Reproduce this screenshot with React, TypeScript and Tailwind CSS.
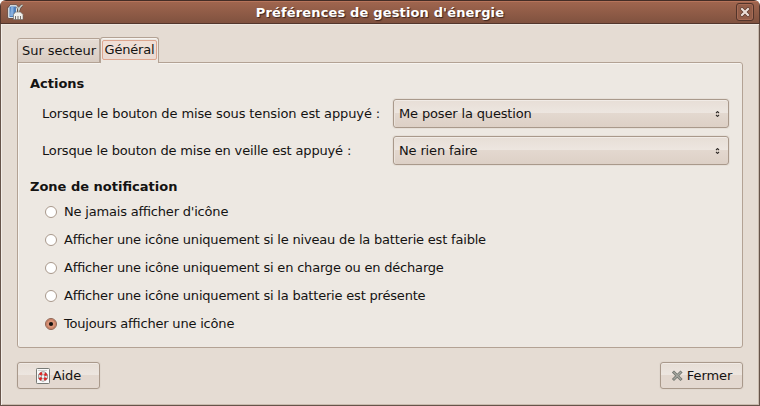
import React from "react";

function TitleIcon() {
  return (
    <svg width="17" height="17" viewBox="0 0 17 17" className="block">
      <path d="M3 .6h6.500l1 1.500v12.400H1.500L.6 13V3.200h1z" fill="#dde5e8" stroke="#5c4038" strokeWidth=".8" />
      <path d="M3.500 2.500h5.500v10.500h-6.500v-9.500z" fill="#4f7fba" />
      <path d="M4 3h2.500v9H3z" fill="#86aedd" />
      <path d="M15.500 1c-2 1-3.500 3-4 7M10.500 2.500l1.500 4" fill="none" stroke="#5c4038" strokeWidth="2.600" />
      <path d="M15.500 1c-2 1-3.500 3-4 7M10.500 2.500l1.500 4" fill="none" stroke="#c5cdc8" strokeWidth="1.500" />
      <path d="M8.500 8h5l2.500 2.500V15.500H6.500v-5z" fill="#f0efec" stroke="#6d6863" strokeWidth=".6" />
      <path d="M8.500 12v3.500M11 12v3.500M13.500 12v3.500" stroke="#66615d" strokeWidth=".9" />
    </svg>
  );
}

function HelpIcon() {
  return (
    <svg width="14" height="16" viewBox="0 0 14 16" className="block">
      <rect x=".5" y=".5" width="13" height="15" rx=".8" fill="#fafafa" stroke="#777a75" />
      <path d="M2 2.500h9" stroke="#d0d1ce" />
      <circle cx="7" cy="8.500" r="3.300" fill="none" stroke="#666" strokeWidth="3.400" />
      <circle cx="7" cy="8.500" r="3.300" fill="none" stroke="#e2dfdd" strokeWidth="2.400" />
      <circle cx="7" cy="8.500" r="3.300" fill="none" stroke="#dd2626" strokeWidth="2.600" strokeDasharray="2.592 2.592" strokeDashoffset="-1.296" />
    </svg>
  );
}

function CloseIcon() {
  return (
    <svg width="12" height="12" viewBox="0 0 12 12" className="block">
      <path d="M3 2.500l6.500 6.500M9.500 2.500L3 9" stroke="#71746e" strokeWidth="3" strokeLinecap="square" />
      <path d="M3 2.500l6.500 6.500M9.500 2.500L3 9" stroke="#a3a69f" strokeWidth="1.400" strokeLinecap="square" />
    </svg>
  );
}

function Combo({ value }: { value: string }) {
  return (
    <button className="flex h-[29px] w-[336px] items-center justify-between rounded-[3px] border border-[#a9998b] bg-[linear-gradient(#e7ded6_0%,#ede6e0_48%,#e3d8cf_50%,#ddd0c6_100%)] pr-[8px] pl-[5px] shadow-[inset_0_1px_0_#f1ebe6,inset_1px_0_0_#ebe3dc,0_0_0_1px_#e6dfd8]">
      <span className="tracking-[-0.15px]">{value}</span>
      <svg width="5" height="6" viewBox="0 0 5 6">
        <path d="M1 2L2.500 .6 4 2M1 4l1.500 1.400L4 4" fill="none" stroke="#332e2b" strokeWidth="1.100" />
      </svg>
    </button>
  );
}

function Radio({ label, checked = false }: { label: string; checked?: boolean }) {
  return (
    <label className="flex h-[28px] items-center">
      <svg width="12" height="12" viewBox="0 0 12 12" className="mr-[7px] block">
        <circle cx="6" cy="6" r="5.500" fill={checked ? "#d99478" : "#fff"} stroke={checked ? "#8d6554" : "#a8988b"} />
        {checked && <circle cx="6" cy="6" r="4.400" fill="none" stroke="#c47d62" />}
        {checked && <circle cx="6" cy="6" r="2.100" fill="#15110f" />}
      </svg>
      <span className="tracking-[-0.19px] [font-feature-settings:'liga'_1]">{label}</span>
    </label>
  );
}

const button =
  "flex h-[27px] w-[83px] items-center justify-center rounded-[3px] border border-[#a9998b] bg-[linear-gradient(#e7ded6_0%,#ede6e0_48%,#e3d8cf_50%,#e3d8d0_100%)] shadow-[inset_0_1px_0_#f1ebe6,0_0_0_1px_#e0d7ce]";

export default function App() {
  return (
    <div className="h-[406px] w-[760px] bg-white font-['DejaVu_Sans',sans-serif] text-[13px] leading-[16px] whitespace-nowrap text-[#141312]">
      <div className="flex h-full flex-col overflow-hidden rounded-t-[6px] bg-[#e5dcd3]">
        <header className="flex h-[24px] items-center border border-[#52362c] border-t-[#442d26] bg-[linear-gradient(#a1664f,#80523f)] pr-[5px] pl-[6px] shadow-[inset_0_1px_0_#b6745b]">
          <TitleIcon />
          <h1 className="flex-1 pt-px text-center font-bold tracking-[0.15px] text-white [text-shadow:1px_1px_1px_#3c241c]">
            Préférences de gestion d'énergie
          </h1>
          <button className="flex h-[18px] w-[18px] items-center justify-center rounded-[3px] border border-[#52342a] bg-[#935e49] shadow-[inset_0_0_0_1px_#a66b55]">
            <svg width="10" height="10" viewBox="0 0 10 10">
              <path d="M2 2l6 6M8 2L2 8" stroke="#5a372b" strokeWidth="3.600" strokeLinecap="square" />
              <path d="M2 2l6 6M8 2L2 8" stroke="#ecdfd8" strokeWidth="2.200" strokeLinecap="square" />
            </svg>
          </button>
        </header>

        <main className="flex flex-1 flex-col border-x border-b border-[#66544a] pr-[16px] pl-[16px] pt-[13px] shadow-[inset_1px_0_0_#f3eee9,inset_0_1px_0_#eee7e0,inset_-1px_-1px_0_#c9bbae]">
          <div className="relative z-10 -mb-px flex h-[26px] items-start">
            <div className="mt-px flex h-[25px] w-[83px] items-center justify-center rounded-tl-[3px] border border-[#b3a294] bg-[linear-gradient(#e5dbd3_0%,#e0d5cc_50%,#d8ccc2_100%)] pl-px tracking-[-0.05px] shadow-[inset_0_1px_0_#eee7e0]">
              Sur secteur
            </div>
            <div className="h-[26px] w-[59px] rounded-t-[3px] border border-b-0 border-[#b3a294] bg-[#ede8e2] px-px pt-[2px] shadow-[inset_0_1px_0_#f7f4f0,0_1px_0_#ede8e2]">
              <div className="flex h-[20px] items-center justify-center rounded-[2px] border border-[#dda58f] bg-[linear-gradient(#f0dfd7_50%,#ebdbd3_50%)] tracking-[-0.2px]">
                Général
              </div>
            </div>
          </div>

          <section className="h-[286px] rounded-b-[3px] rounded-tr-[3px] border border-[#b3a294] bg-[#ede8e2] pt-[13px] pr-[13px] pl-[12px] shadow-[inset_1px_1px_0_#f7f4f0]">
            <h2 className="font-bold">Actions</h2>
            <div className="mt-[7px] flex h-[29px] items-center justify-between pl-[12px]">
              <span className="tracking-[-0.11px]">Lorsque le bouton de mise sous tension est appuyé :</span>
              <Combo value="Me poser la question" />
            </div>
            <div className="mt-[8px] flex h-[29px] items-center justify-between pl-[12px]">
              <span className="tracking-[-0.16px]">Lorsque le bouton de mise en veille est appuyé :</span>
              <Combo value="Ne rien faire" />
            </div>
            <h2 className="mt-[14px] font-bold">Zone de notification</h2>
            <div className="mt-[3px] pl-[15px]">
              <Radio label="Ne jamais afficher d'icône" />
              <Radio label="Afficher une icône uniquement si le niveau de la batterie est faible" />
              <Radio label="Afficher une icône uniquement si en charge ou en décharge" />
              <Radio label="Afficher une icône uniquement si la batterie est présente" />
              <Radio label="Toujours afficher une icône" checked />
            </div>
          </section>

          <footer className="mt-[14px] flex justify-between">
            <button className={button}>
              <span className="mr-[3px]"><HelpIcon /></span>
              <span className="tracking-[-0.1px]">Aide</span>
            </button>
            <button className={button}>
              <span className="mr-[4px]"><CloseIcon /></span>
              <span className="tracking-[-0.1px]">Fermer</span>
            </button>
          </footer>
        </main>
      </div>
    </div>
  );
}
